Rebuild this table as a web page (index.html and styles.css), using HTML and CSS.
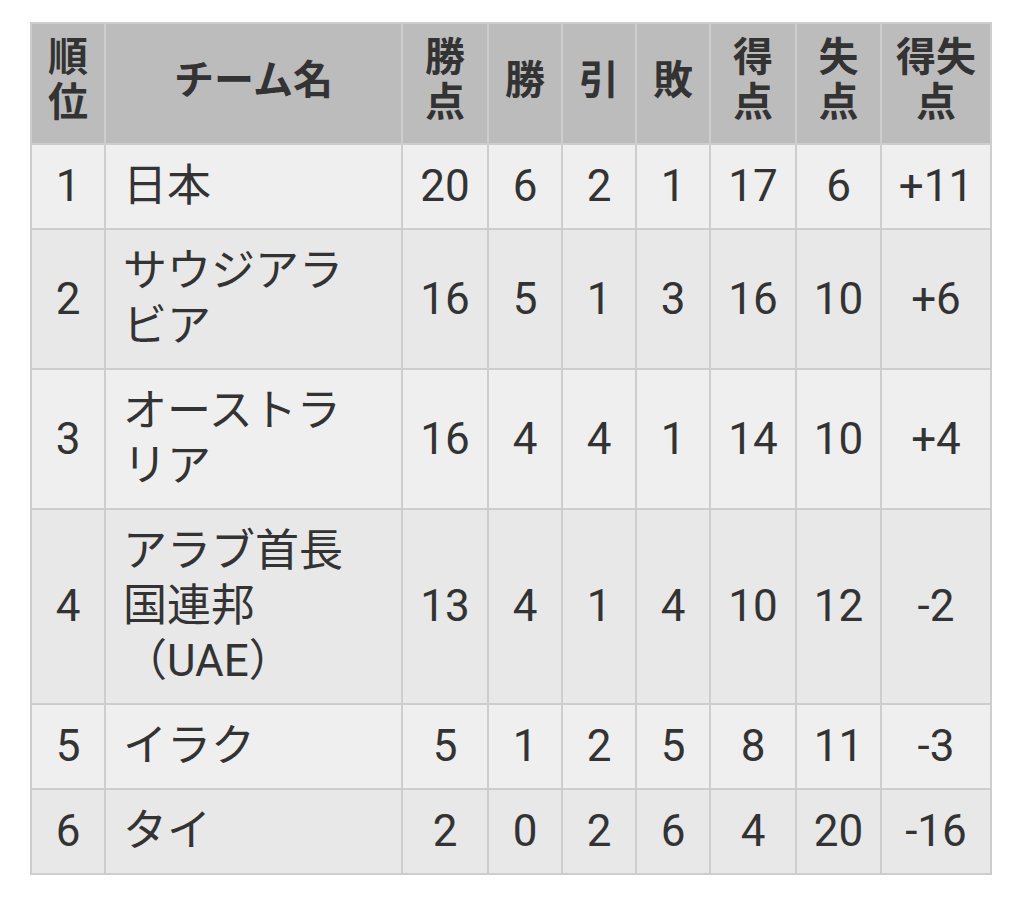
FILE: index.html
```html
<!DOCTYPE html>
<html lang="ja">
<head>
<meta charset="utf-8">
<title>順位表</title>
<link rel="stylesheet" href="styles.css">
</head>
<body>
<table class="standings">
  <colgroup>
    <col class="c-rank">
    <col class="c-team">
    <col class="c-pts">
    <col class="c-w">
    <col class="c-d">
    <col class="c-l">
    <col class="c-gf">
    <col class="c-ga">
    <col class="c-gd">
  </colgroup>
  <thead>
    <tr>
      <th>順<br>位</th>
      <th>チーム名</th>
      <th>勝<br>点</th>
      <th>勝</th>
      <th>引</th>
      <th>敗</th>
      <th>得<br>点</th>
      <th>失<br>点</th>
      <th>得失<br>点</th>
    </tr>
  </thead>
  <tbody>
    <tr>
      <td>1</td><td class="team">日本</td><td>20</td><td>6</td><td>2</td><td>1</td><td>17</td><td>6</td><td>+11</td>
    </tr>
    <tr>
      <td>2</td><td class="team">サウジアラ<br>ビア</td><td>16</td><td>5</td><td>1</td><td>3</td><td>16</td><td>10</td><td>+6</td>
    </tr>
    <tr>
      <td>3</td><td class="team">オーストラ<br>リア</td><td>16</td><td>4</td><td>4</td><td>1</td><td>14</td><td>10</td><td>+4</td>
    </tr>
    <tr>
      <td>4</td><td class="team">アラブ首長<br>国連邦<br>（UAE）</td><td>13</td><td>4</td><td>1</td><td>4</td><td>10</td><td>12</td><td>-2</td>
    </tr>
    <tr>
      <td>5</td><td class="team">イラク</td><td>5</td><td>1</td><td>2</td><td>5</td><td>8</td><td>11</td><td>-3</td>
    </tr>
    <tr>
      <td>6</td><td class="team">タイ</td><td>2</td><td>0</td><td>2</td><td>6</td><td>4</td><td>20</td><td>-16</td>
    </tr>
  </tbody>
</table>
</body>
</html>
```

FILE: styles.css
```css
html, body {
  margin: 0;
  background: #ffffff;
}

body {
  padding: 22px 0 0 30px;
  font-family: Roboto, "Noto Sans CJK JP", sans-serif;
  color: #333333;
}

.standings {
  border-collapse: collapse;
  table-layout: fixed;
  width: 960px;
}

.c-rank { width: 74px; }
.c-team { width: 297px; }
.c-pts  { width: 86px; }
.c-w    { width: 74px; }
.c-d    { width: 74px; }
.c-l    { width: 74px; }
.c-gf   { width: 86px; }
.c-ga   { width: 85px; }
.c-gd   { width: 110px; }

.standings th,
.standings td {
  border: 2px solid #cdcdcd;
  text-align: center;
  vertical-align: middle;
  padding: 0;
}

.standings th {
  background: #bcbcbc;
  font-family: "Noto Sans CJK JP", sans-serif;
  font-weight: 700;
  font-size: 40px;
  line-height: 45px;
  padding: 8px 0 21px;
  color: #333333;
}

.standings td {
  font-size: 44px;
  line-height: 55px;
  padding: 14px 0 14px;
}

.standings tbody tr:nth-child(odd) td {
  background: #efefef;
}

.standings tbody tr:nth-child(even) td {
  background: #e8e8e8;
}

.standings td.team {
  text-align: left;
  padding-left: 17px;
}
```
